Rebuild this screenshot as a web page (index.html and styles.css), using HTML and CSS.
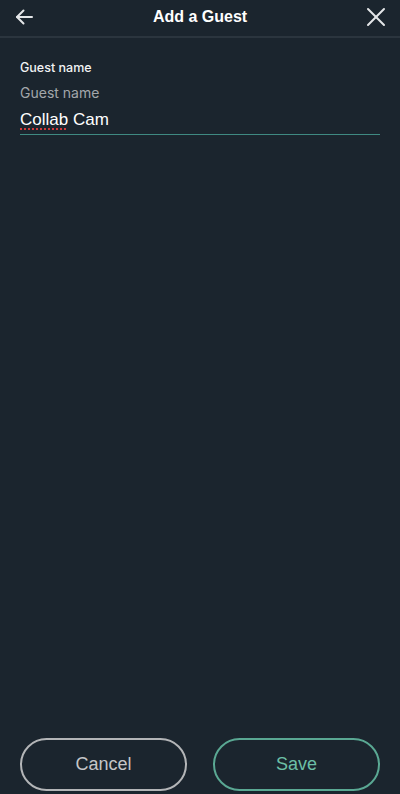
FILE: index.html
```html
<!DOCTYPE html>
<html lang="en">

<head>
    <meta charset="UTF-8">
    <meta name="viewport" content="width=device-width, initial-scale=1">
    <title>Add a Guest</title>
    <link rel="stylesheet" href="styles.css">
</head>

<body>
    <div class="screen">

        <header class="topbar">
            <button class="icon-btn" aria-label="Back">
                <svg width="20" height="20" viewBox="0 0 20 20" fill="none" stroke="currentColor" stroke-width="2" stroke-linecap="round" stroke-linejoin="round">
                    <path d="M18 10H3"></path>
                    <path d="M9.5 3.5L3 10l6.5 6.5"></path>
                </svg>
            </button>
            <h1 class="title">Add a Guest</h1>
            <button class="icon-btn" aria-label="Close">
                <svg width="20" height="20" viewBox="0 0 20 20" fill="none" stroke="currentColor" stroke-width="2" stroke-linecap="round">
                    <path d="M2 2l16 16"></path>
                    <path d="M18 2L2 18"></path>
                </svg>
            </button>
        </header>

        <main class="content">
            <div class="field">
                <div class="field-label">Guest name</div>
                <label class="float-label">Guest name</label>
                <div class="field-input"><span class="misspelled">Collab</span> Cam</div>
            </div>
        </main>

        <footer class="actions">
            <button class="pill pill-cancel">Cancel</button>
            <button class="pill pill-save">Save</button>
        </footer>

    </div>
</body>

</html>
```

FILE: styles.css
```css
/* Dark theme */
:root {
    --background: #1b252e;
    --divider: #2b353e;
    --text: #ffffff;
    --muted: #a3a7ab;
    --accent: #6cbfa6;
    --accent-border: #5aa893;
    --underline: #3f8a82;
    --cancel: #c4c6c8;
}

* {
    margin: 0;
    padding: 0;
    box-sizing: border-box;
}

body {
    font-family: Inter, "Liberation Sans", Arial, sans-serif;
    background-color: var(--background);
    color: var(--text);
}

.screen {
    height: 794px;
    display: flex;
    flex-direction: column;
}

/* Top bar */
.topbar {
    height: 38px;
    display: flex;
    align-items: center;
    justify-content: space-between;
    padding: 0 13px 2px;
    border-bottom: 2px solid var(--divider);
}

.title {
    font-family: "Liberation Sans", Arial, sans-serif;
    font-size: 16px;
    font-weight: 700;
    color: var(--text);
}

.icon-btn {
    width: 22px;
    height: 22px;
    display: flex;
    align-items: center;
    justify-content: center;
    background: none;
    border: none;
    color: #e4e6e8;
}

/* Form */
.content {
    flex: 1;
    padding: 22px 20px 0;
}

.field-label {
    font-size: 12.5px;
    font-weight: 500;
    line-height: 16px;
    color: #f2f3f4;
}

.float-label {
    display: block;
    margin-top: 8px;
    font-size: 14px;
    line-height: 18px;
    color: var(--muted);
}

.field-input {
    font-family: "Liberation Sans", Arial, sans-serif;
    font-size: 17px;
    line-height: 20px;
    padding: 8px 0 4px;
    border-bottom: 1px solid var(--underline);
    color: var(--text);
}

.misspelled {
    text-decoration: underline dotted #d03a3a;
    text-decoration-thickness: 2px;
    text-underline-offset: 3px;
}

/* Bottom actions */
.actions {
    display: flex;
    gap: 26px;
    padding: 0 20px 3px;
}

.pill {
    flex: 1;
    height: 53px;
    border-radius: 27px;
    background: none;
    font-family: "Liberation Sans", Arial, sans-serif;
    font-size: 18px;
}

.pill-cancel {
    border: 2px solid #b3b5b7;
    color: var(--cancel);
}

.pill-save {
    border: 2px solid var(--accent-border);
    color: var(--accent);
}
```
